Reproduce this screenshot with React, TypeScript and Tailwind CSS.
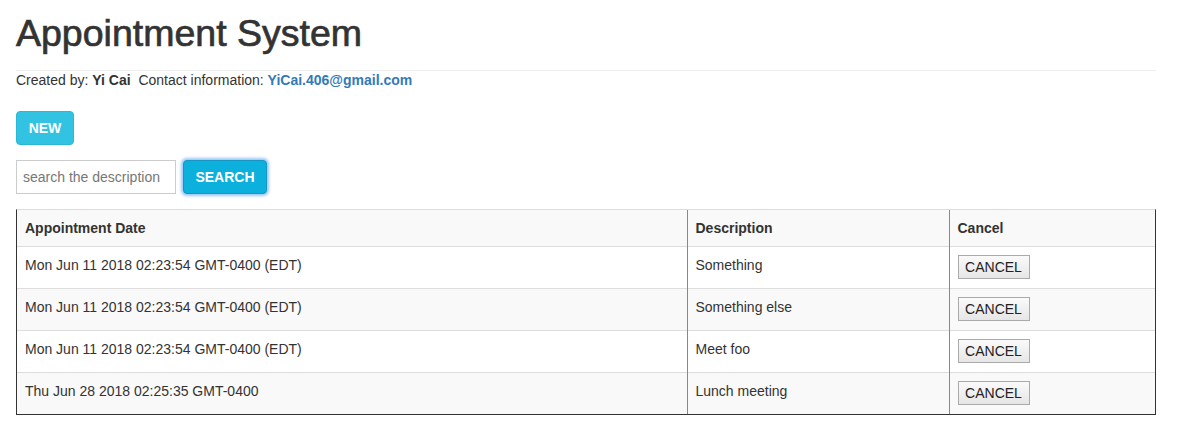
import React from "react";

const rows = [
  { date: "Mon Jun 11 2018 02:23:54 GMT-0400 (EDT)", desc: "Something" },
  { date: "Mon Jun 11 2018 02:23:54 GMT-0400 (EDT)", desc: "Something else" },
  { date: "Mon Jun 11 2018 02:23:54 GMT-0400 (EDT)", desc: "Meet foo" },
  { date: "Thu Jun 28 2018 02:25:35 GMT-0400", desc: "Lunch meeting" },
];

export default function App() {
  return (
    <div
      className="min-h-[439px] bg-white text-[#333] text-[14px] leading-[20px]"
      style={{ fontFamily: '"Liberation Sans", Arial, Helvetica, sans-serif' }}
    >
      <div className="ml-4 w-[1140px]">
        <h1 className="pt-[13px] pb-[17px] text-[37.5px] leading-[40px] font-normal text-[#333] [-webkit-text-stroke:0.7px_#333]">
          Appointment System
        </h1>
        <div className="h-px bg-[#eee]" />
        <p className="h-[20px] leading-[18px] text-[14px] text-[#333]">
          Created by: <b>Yi Cai</b>&nbsp; Contact information:{" "}
          <a className="font-bold text-[#337ab7]">YiCai.406@gmail.com</a>
        </p>
        <div className="mt-[20px]">
          <button className="h-[34px] w-[58px] rounded-[4px] border border-[#2bb8d8] bg-[#33c3e2] text-[14px] font-bold text-white">
            NEW
          </button>
        </div>
        <div className="mt-[15px] flex items-center gap-[7px]">
          <input
            className="h-[34px] w-[160px] border border-[#ccc] px-[6px] text-[14px] text-[#555] outline-none placeholder:text-[#777]"
            placeholder="search the description"
          />
          <button className="h-[34px] w-[84px] rounded-[4px] border border-[#1597c6] bg-[#0bb0dc] text-[14px] font-bold text-white shadow-[0_0_3px_2px_rgba(90,160,235,0.6)]">
            SEARCH
          </button>
        </div>
        <div className="mt-[15px] w-[1140px] border-l border-r border-b border-[#333] border-t border-t-[#ddd]">
          <table className="w-full border-collapse text-[14px]">
            <colgroup>
              <col className="w-[670px]" />
              <col className="w-[262px]" />
              <col />
            </colgroup>
            <thead>
              <tr className="bg-[#f9f9f9]">
                <th className="px-2 pt-[8px] pb-[8px] text-left font-bold align-top">Appointment Date</th>
                <th className="px-2 pt-[8px] pb-[8px] text-left font-bold border-l border-[#888] align-top">Description</th>
                <th className="px-2 pt-[8px] pb-[8px] text-left font-bold border-l border-[#888] align-top">Cancel</th>
              </tr>
            </thead>
            <tbody>
              {rows.map((r, i) => (
                <tr key={i} className={i % 2 === 1 ? "bg-[#f9f9f9]" : "bg-white"}>
                  <td className="border-t border-[#ddd] px-2 pt-[8px] pb-[9px] align-top">{r.date}</td>
                  <td className="border-t border-t-[#ddd] border-l border-l-[#888] px-2 pt-[8px] pb-[9px] align-top">{r.desc}</td>
                  <td className="border-t border-t-[#ddd] border-l border-l-[#888] px-2 pt-[8px] pb-[9px] align-top">
                    <button className="block h-[24px] w-[72px] border border-[#aaa] bg-gradient-to-b from-[#fafafa] to-[#e6e6e6] text-[14px] leading-[20px] text-[#222]">
                      CANCEL
                    </button>
                  </td>
                </tr>
              ))}
            </tbody>
          </table>
        </div>
      </div>
    </div>
  );
}
